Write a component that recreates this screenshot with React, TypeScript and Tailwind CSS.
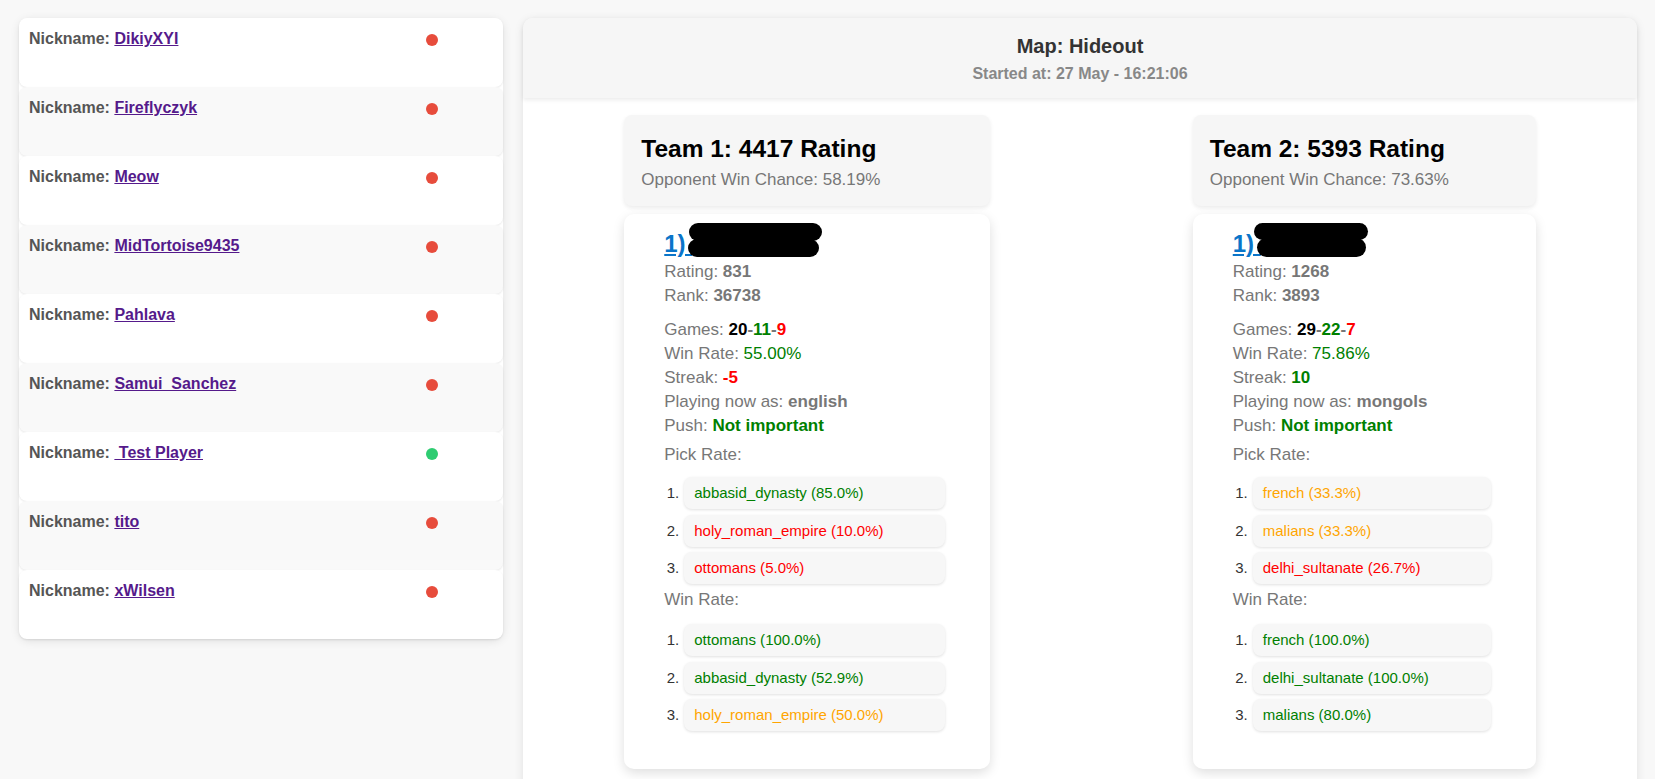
import React from "react";

type Item = { name: string; pct: string; color: string };

type Player = {
  rating: string;
  rank: string;
  games: [string, string, string];
  winRate: string;
  streak: string;
  streakColor: string;
  civ: string;
  pick: Item[];
  wins: Item[];
  blob: { w: number; shift: string; r1: number[]; r2: number[] };
};

type Team = {
  title: string;
  chance: string;
  width: string;
  player: Player;
};

const GREEN = "text-[#008000]";
const RED = "text-[#ff0000]";
const ORANGE = "text-[#ffa500]";

const players = [
  { nick: "DikiyXYI", online: false },
  { nick: "Fireflyczyk", online: false },
  { nick: "Meow", online: false },
  { nick: "MidTortoise9435", online: false },
  { nick: "Pahlava", online: false },
  { nick: "Samui_Sanchez", online: false },
  { nick: "\u00a0Test Player", online: true },
  { nick: "tito", online: false },
  { nick: "xWilsen", online: false },
];

const teams: Team[] = [
  {
    title: "Team 1: 4417 Rating",
    chance: "Opponent Win Chance: 58.19%",
    width: "w-[366px]",
    player: {
      rating: "831",
      rank: "36738",
      games: ["20", "11", "9"],
      winRate: "55.00%",
      streak: "-5",
      streakColor: RED,
      civ: "english",
      pick: [
        { name: "abbasid_dynasty", pct: "85.0%", color: GREEN },
        { name: "holy_roman_empire", pct: "10.0%", color: RED },
        { name: "ottomans", pct: "5.0%", color: RED },
      ],
      wins: [
        { name: "ottomans", pct: "100.0%", color: GREEN },
        { name: "abbasid_dynasty", pct: "52.9%", color: GREEN },
        { name: "holy_roman_empire", pct: "50.0%", color: ORANGE },
      ],
      blob: { w: 134, shift: "-ml-[4px]", r1: [1, 0, 133, 18], r2: [0, 16, 131, 18] },
    },
  },
  {
    title: "Team 2: 5393 Rating",
    chance: "Opponent Win Chance: 73.63%",
    width: "w-[343px]",
    player: {
      rating: "1268",
      rank: "3893",
      games: ["29", "22", "7"],
      winRate: "75.86%",
      streak: "10",
      streakColor: GREEN,
      civ: "mongols",
      pick: [
        { name: "french", pct: "33.3%", color: ORANGE },
        { name: "malians", pct: "33.3%", color: ORANGE },
        { name: "delhi_sultanate", pct: "26.7%", color: RED },
      ],
      wins: [
        { name: "french", pct: "100.0%", color: GREEN },
        { name: "delhi_sultanate", pct: "100.0%", color: GREEN },
        { name: "malians", pct: "80.0%", color: GREEN },
      ],
      blob: { w: 115, shift: "-ml-[7px]", r1: [0, 0, 114, 17], r2: [3, 15, 109, 19] },
    },
  },
];

function CivList({ items, className }: { items: Item[]; className: string }) {
  return (
    <ol className={className}>
      {items.map((it, i) => (
        <li key={it.name} className="flex items-center mb-[5.5px] last:mb-0">
          <span className="w-[15px] text-right text-[15px] text-[#333]">{i + 1}.</span>
          <div
            className={`ml-[5px] flex-1 h-[32px] leading-[32px] pl-[10px] rounded-[8px] bg-[#f7f7f7] shadow-[0_1px_3px_rgba(0,0,0,0.12)] text-[15px] ${it.color}`}
          >
            {it.name} ({it.pct})
          </div>
        </li>
      ))}
    </ol>
  );
}

function PlayerCard({ p }: { p: Player }) {
  const [r1, r2] = [p.blob.r1, p.blob.r2];
  return (
    <div className="mt-[8px] rounded-[10px] bg-white shadow-[0_4px_12px_rgba(0,0,0,0.13)] pt-[16px] pb-[38px] pl-[40px] pr-[45px] text-[17px] leading-[24px] text-[#777]">
      <h3 className="h-[28px] text-[24px] leading-[28px] font-bold whitespace-nowrap">
        <a href="#" className="text-[#0a75c9] underline">
          1)&nbsp;
        </a>
        {/* redacted player name */}
        <svg
          width={p.blob.w}
          height="34"
          viewBox={`0 0 ${p.blob.w} 34`}
          className={`inline-block align-[5px] -my-[10px] ${p.blob.shift}`}
        >
          <rect x={r1[0]} y={r1[1]} width={r1[2]} height={r1[3]} rx={r1[3] / 2} fill="#000" />
          <rect x={r2[0]} y={r2[1]} width={r2[2]} height={r2[3]} rx={r2[3] / 2} fill="#000" />
        </svg>
      </h3>
      <div className="mt-[2px]">
        Rating: <b>{p.rating}</b>
      </div>
      <div>
        Rank: <b>{p.rank}</b>
      </div>
      <div className="mt-[10px]">
        Games: <b className="text-black">{p.games[0]}</b>
        <b>-</b>
        <b className={GREEN}>{p.games[1]}</b>
        <b>-</b>
        <b className={RED}>{p.games[2]}</b>
      </div>
      <div>
        Win Rate: <span className={GREEN}>{p.winRate}</span>
      </div>
      <div>
        Streak: <b className={p.streakColor}>{p.streak}</b>
      </div>
      <div>
        Playing now as: <b>{p.civ}</b>
      </div>
      <div>
        Push: <b className={GREEN}>Not important</b>
      </div>
      <div className="mt-[5px]">Pick Rate:</div>
      <CivList items={p.pick} className="mt-[10px]" />
      <div className="mt-[4px]">Win Rate:</div>
      <CivList items={p.wins} className="mt-[12px]" />
    </div>
  );
}

export default function App() {
  return (
    <div className="min-h-screen bg-[#f8f8f8] font-['Liberation_Sans',Arial,sans-serif] flex gap-[20px] pl-[19px] pr-[18px] pt-[18px]">
      {/* Players list */}
      <div className="w-[484px] shrink-0 self-start rounded-[10px] bg-white shadow-[0_2px_10px_rgba(0,0,0,0.1)]">
        {players.map((pl, i) => (
          <div
            key={pl.nick}
            className={`h-[69px] flex items-start px-[10px] pt-[12px] rounded-[8px] shadow-[0_1px_2px_rgba(0,0,0,0.09)] ${
              i % 2 === 1 ? "bg-[#f9f9f9]" : "bg-white"
            }`}
          >
            <div className="w-[397px] text-[16px] leading-[18px] font-bold text-[#555]">
              Nickname:{" "}
              <a href="#" className="text-[#551a8b] underline">
                {pl.nick}
              </a>
            </div>
            <span
              className={`mt-[4px] w-[12px] h-[12px] rounded-full ${
                pl.online ? "bg-[#2ecc71]" : "bg-[#e74c3c]"
              }`}
            />
          </div>
        ))}
      </div>

      {/* Match panel */}
      <div className="flex-1 rounded-[10px] bg-white shadow-[0_2px_10px_rgba(0,0,0,0.1)] pb-[60px]">
        <div className="h-[80px] rounded-t-[10px] bg-[#f6f6f6] shadow-[0_2px_4px_rgba(0,0,0,0.08)] pt-[17px] text-center">
          <div className="text-[20px] leading-[23px] font-bold text-[#333]">Map: Hideout</div>
          <div className="mt-[7px] text-[16px] leading-[18px] font-bold text-[#888]">
            Started at: 27 May - 16:21:06
          </div>
        </div>

        <div className="flex justify-around pt-[17px]">
          {teams.map((t) => (
            <div key={t.title} className={t.width}>
              <div className="rounded-[8px] bg-[#f6f6f6] shadow-[0_2px_4px_rgba(0,0,0,0.08)] px-[17px] pt-[20px] pb-[16px]">
                <h2 className="text-[24.5px] leading-[28px] font-bold text-black">{t.title}</h2>
                <p className="mt-[7px] text-[17px] leading-[20px] text-[#777]">{t.chance}</p>
              </div>
              <PlayerCard p={t.player} />
            </div>
          ))}
        </div>
      </div>
    </div>
  );
}
